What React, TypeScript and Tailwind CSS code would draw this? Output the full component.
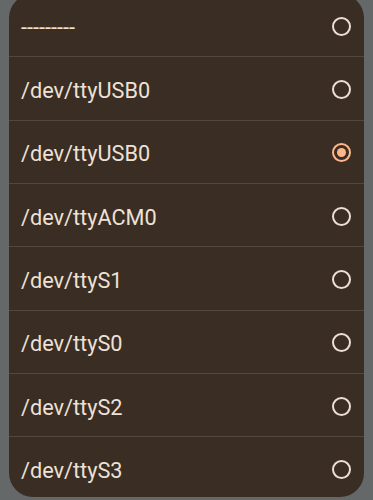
const ports = [
	{ name: "---------", selected: false },
	{ name: "/dev/ttyUSB0", selected: false },
	{ name: "/dev/ttyUSB0", selected: true },
	{ name: "/dev/ttyACM0", selected: false },
	{ name: "/dev/ttyS1", selected: false },
	{ name: "/dev/ttyS0", selected: false },
	{ name: "/dev/ttyS2", selected: false },
	{ name: "/dev/ttyS3", selected: false },
];

function Radio({ checked }: { checked: boolean }) {
	if (checked) {
		return (
			<span className="mt-[2px] flex h-[19px] w-[19px] items-center justify-center rounded-full border-2 border-[#ffb68a]">
				<span className="h-[9px] w-[9px] rounded-full bg-[#ffb68a]" />
			</span>
		);
	}
	return <span className="mt-[2px] h-[19px] w-[19px] rounded-full border-2 border-[#efdfd2]" />;
}

export default function App() {
	return (
		<div className="h-[500px] w-[373px] overflow-hidden bg-[#656869] px-[9px] font-['Roboto',sans-serif]">
			<div className="-mt-[6px] h-[503px] overflow-hidden rounded-[24px] bg-[#392d24]">
				{ports.map((port, i) => (
					<div
						key={i}
						className="flex h-[63.33px] items-center justify-between border-b border-[#54473d] pl-3 pr-[13px]"
					>
						<span className="mt-[5px] text-[21.7px] leading-none text-[#eee1d6]">{port.name}</span>
						<Radio checked={port.selected} />
					</div>
				))}
			</div>
		</div>
	);
}
